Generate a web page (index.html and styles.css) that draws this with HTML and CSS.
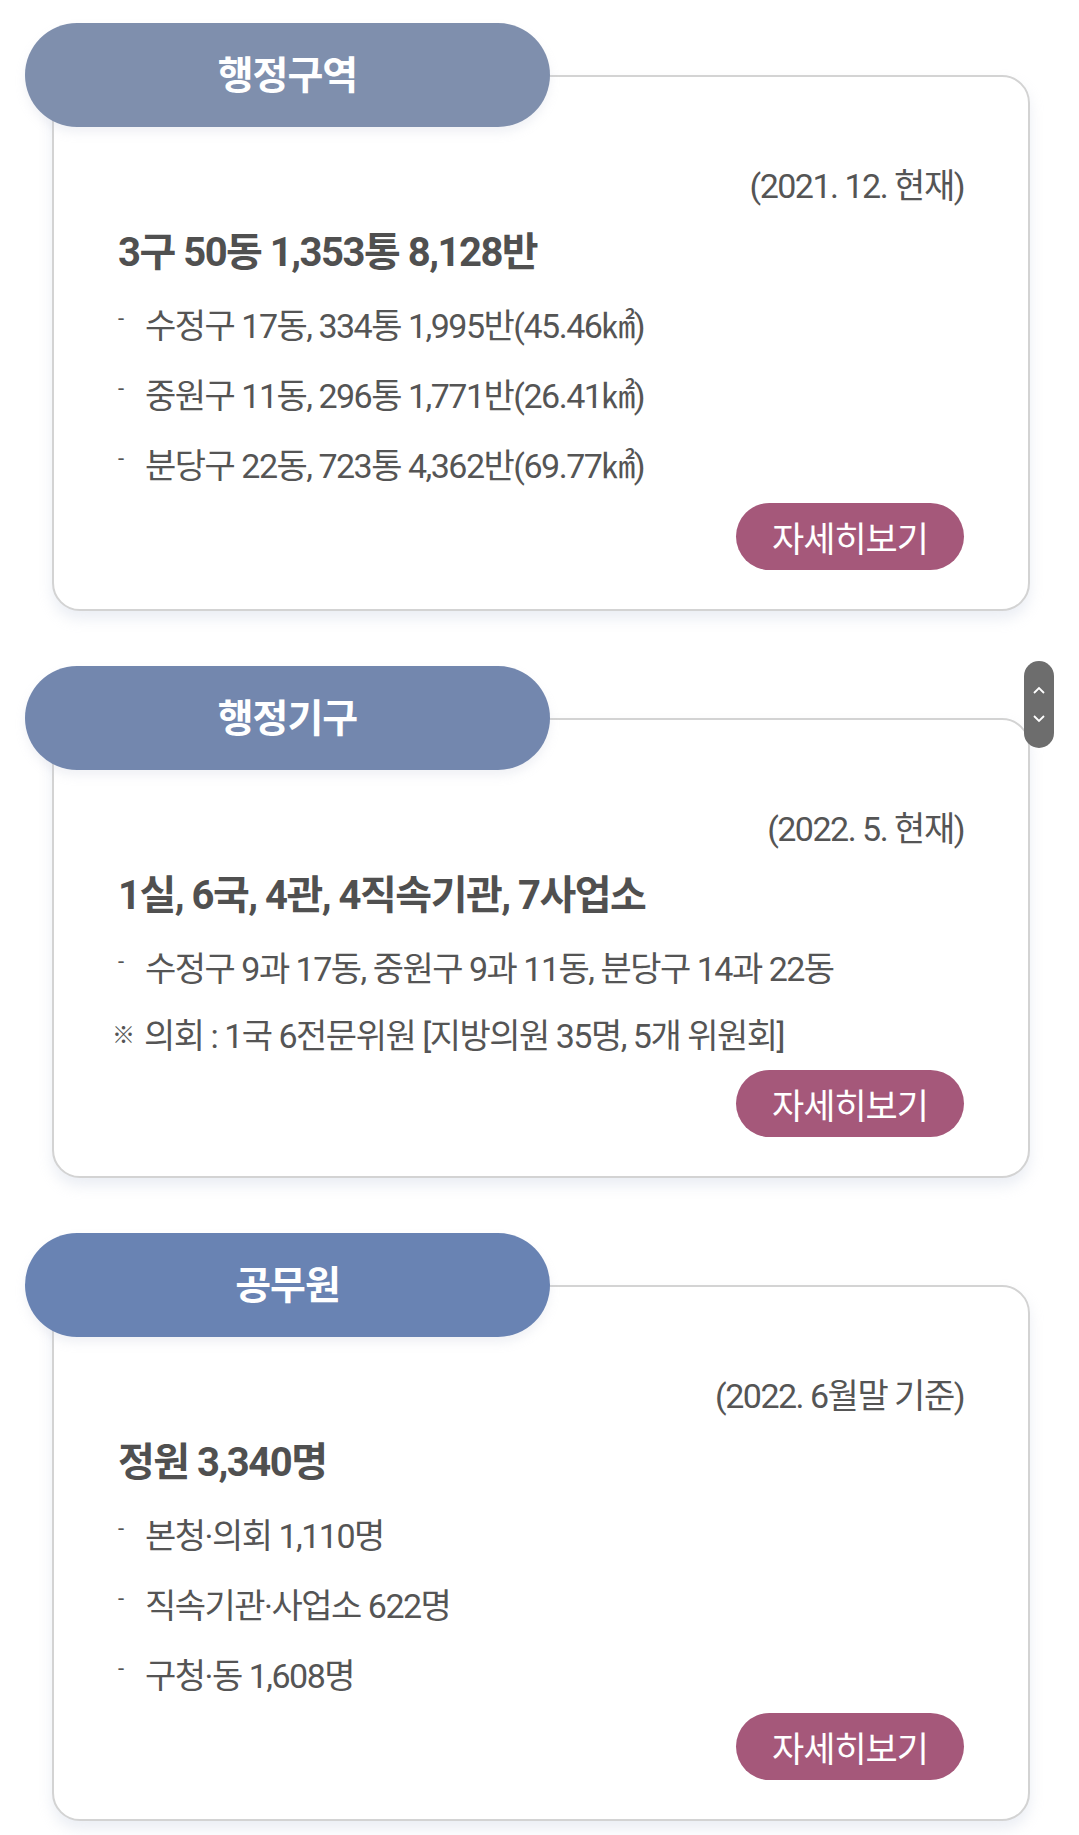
FILE: index.html
```html
<!DOCTYPE html>
<html lang="ko">
<head>
  <meta charset="UTF-8">
  <title>시정 현황</title>
  <meta name="viewport" content="width=device-width, initial-scale=1">
  <link rel="stylesheet" href="styles.css">
</head>
<body>
  <div class="wrap">
    <section class="box">
      <h2 class="tab tab-1">행정구역</h2>
      <div class="card">
        <p class="date">(2021. 12. 현재)</p>
        <h3 class="lead">3구 50동 1,353통 8,128반</h3>
        <ul class="list">
          <li>수정구 17동, 334통 1,995반(45.46㎢)</li>
          <li>중원구 11동, 296통 1,771반(26.41㎢)</li>
          <li>분당구 22동, 723통 4,362반(69.77㎢)</li>
        </ul>
        <div class="more"><a href="#" class="btn">자세히보기</a></div>
      </div>
    </section>

    <section class="box">
      <h2 class="tab tab-2">행정기구</h2>
      <div class="card">
        <p class="date">(2022. 5. 현재)</p>
        <h3 class="lead">1실, 6국, 4관, 4직속기관, 7사업소</h3>
        <ul class="list">
          <li>수정구 9과 17동, 중원구 9과 11동, 분당구 14과 22동</li>
          <li class="note">의회 : 1국 6전문위원 [지방의원 35명, 5개 위원회]</li>
        </ul>
        <div class="more"><a href="#" class="btn">자세히보기</a></div>
      </div>
    </section>

    <section class="box">
      <h2 class="tab tab-3">공무원</h2>
      <div class="card">
        <p class="date">(2022. 6월말 기준)</p>
        <h3 class="lead">정원 3,340명</h3>
        <ul class="list">
          <li>본청·의회 1,110명</li>
          <li>직속기관·사업소 622명</li>
          <li>구청·동 1,608명</li>
        </ul>
        <div class="more"><a href="#" class="btn">자세히보기</a></div>
      </div>
    </section>
  </div>

  <div class="pager">
    <svg width="14" height="10" viewBox="0 0 14 10"><path d="M2 8 L7 3 L12 8" fill="none" stroke="#fff" stroke-width="1.8"/></svg>
    <svg width="14" height="10" viewBox="0 0 14 10"><path d="M2 2 L7 7 L12 2" fill="none" stroke="#fff" stroke-width="1.8"/></svg>
  </div>
</body>
</html>
```

FILE: styles.css
```css
body {
  margin: 0;
  padding: 0;
  background: #fff;
  font-family: Roboto, "Noto Sans CJK KR", sans-serif;
  color: #555;
}
.wrap {
  padding: 23px 0 20px 0;
}
.box {
  margin-bottom: 55px;
}
.tab {
  position: relative;
  z-index: 1;
  margin: 0 0 0 25px;
  width: 525px;
  height: 104px;
  box-sizing: border-box;
  padding-bottom: 6px;
  border-radius: 52px;
  display: flex;
  align-items: center;
  justify-content: center;
  color: #fff;
  font-size: 39px;
  font-weight: 700;
  letter-spacing: -1px;
  box-shadow: 0 6px 10px rgba(200,205,220,0.25);
}
.tab-1 { background: #7f8fad; }
.tab-2 { background: #7387ae; }
.tab-3 { background: #6983b3; }
.card {
  margin: -52px 0 0 52px;
  width: 978px;
  box-sizing: border-box;
  border: 2px solid #d3d3d3;
  border-radius: 28px;
  padding: 84px 64px 39px 64px;
  background: #fff;
  box-shadow: 0 8px 14px rgba(190,198,220,0.3);
}
.date {
  margin: 0;
  text-align: right;
  font-size: 34px;
  line-height: 50px;
  letter-spacing: -1.5px;
}
.lead {
  margin: 17px 0 0 0;
  font-size: 40px;
  line-height: 50px;
  font-weight: 700;
  letter-spacing: -1.5px;
  color: #505050;
}
.list {
  list-style: none;
  margin: 13px 0 0 0;
  padding: 0;
}
.list li {
  display: flex;
  font-size: 34px;
  line-height: 70px;
  letter-spacing: -1.5px;
}
.list li::before {
  content: "-";
  width: 27px;
  flex: none;
  font-size: 22px;
  line-height: 56px;
}
.list li.note {
  line-height: 64px;
}
.list li.note::before {
  content: "※";
  width: 32px;
  margin-left: -6px;
  font-size: 23px;
  font-weight: 700;
  line-height: 64px;
}
.more {
  margin-top: 2px;
  display: flex;
  justify-content: flex-end;
}
.btn {
  display: flex;
  align-items: center;
  justify-content: center;
  width: 228px;
  height: 67px;
  border-radius: 34px;
  background: #a5587a;
  color: #fff;
  text-decoration: none;
  font-size: 35px;
  letter-spacing: -1px;
}
.pager {
  position: absolute;
  top: 661px;
  left: 1024px;
  width: 30px;
  height: 87px;
  border-radius: 15px;
  background: #6d6d6d;
  display: flex;
  flex-direction: column;
  align-items: center;
  justify-content: center;
  gap: 19px;
}
.pager svg {
  display: block;
}
```
